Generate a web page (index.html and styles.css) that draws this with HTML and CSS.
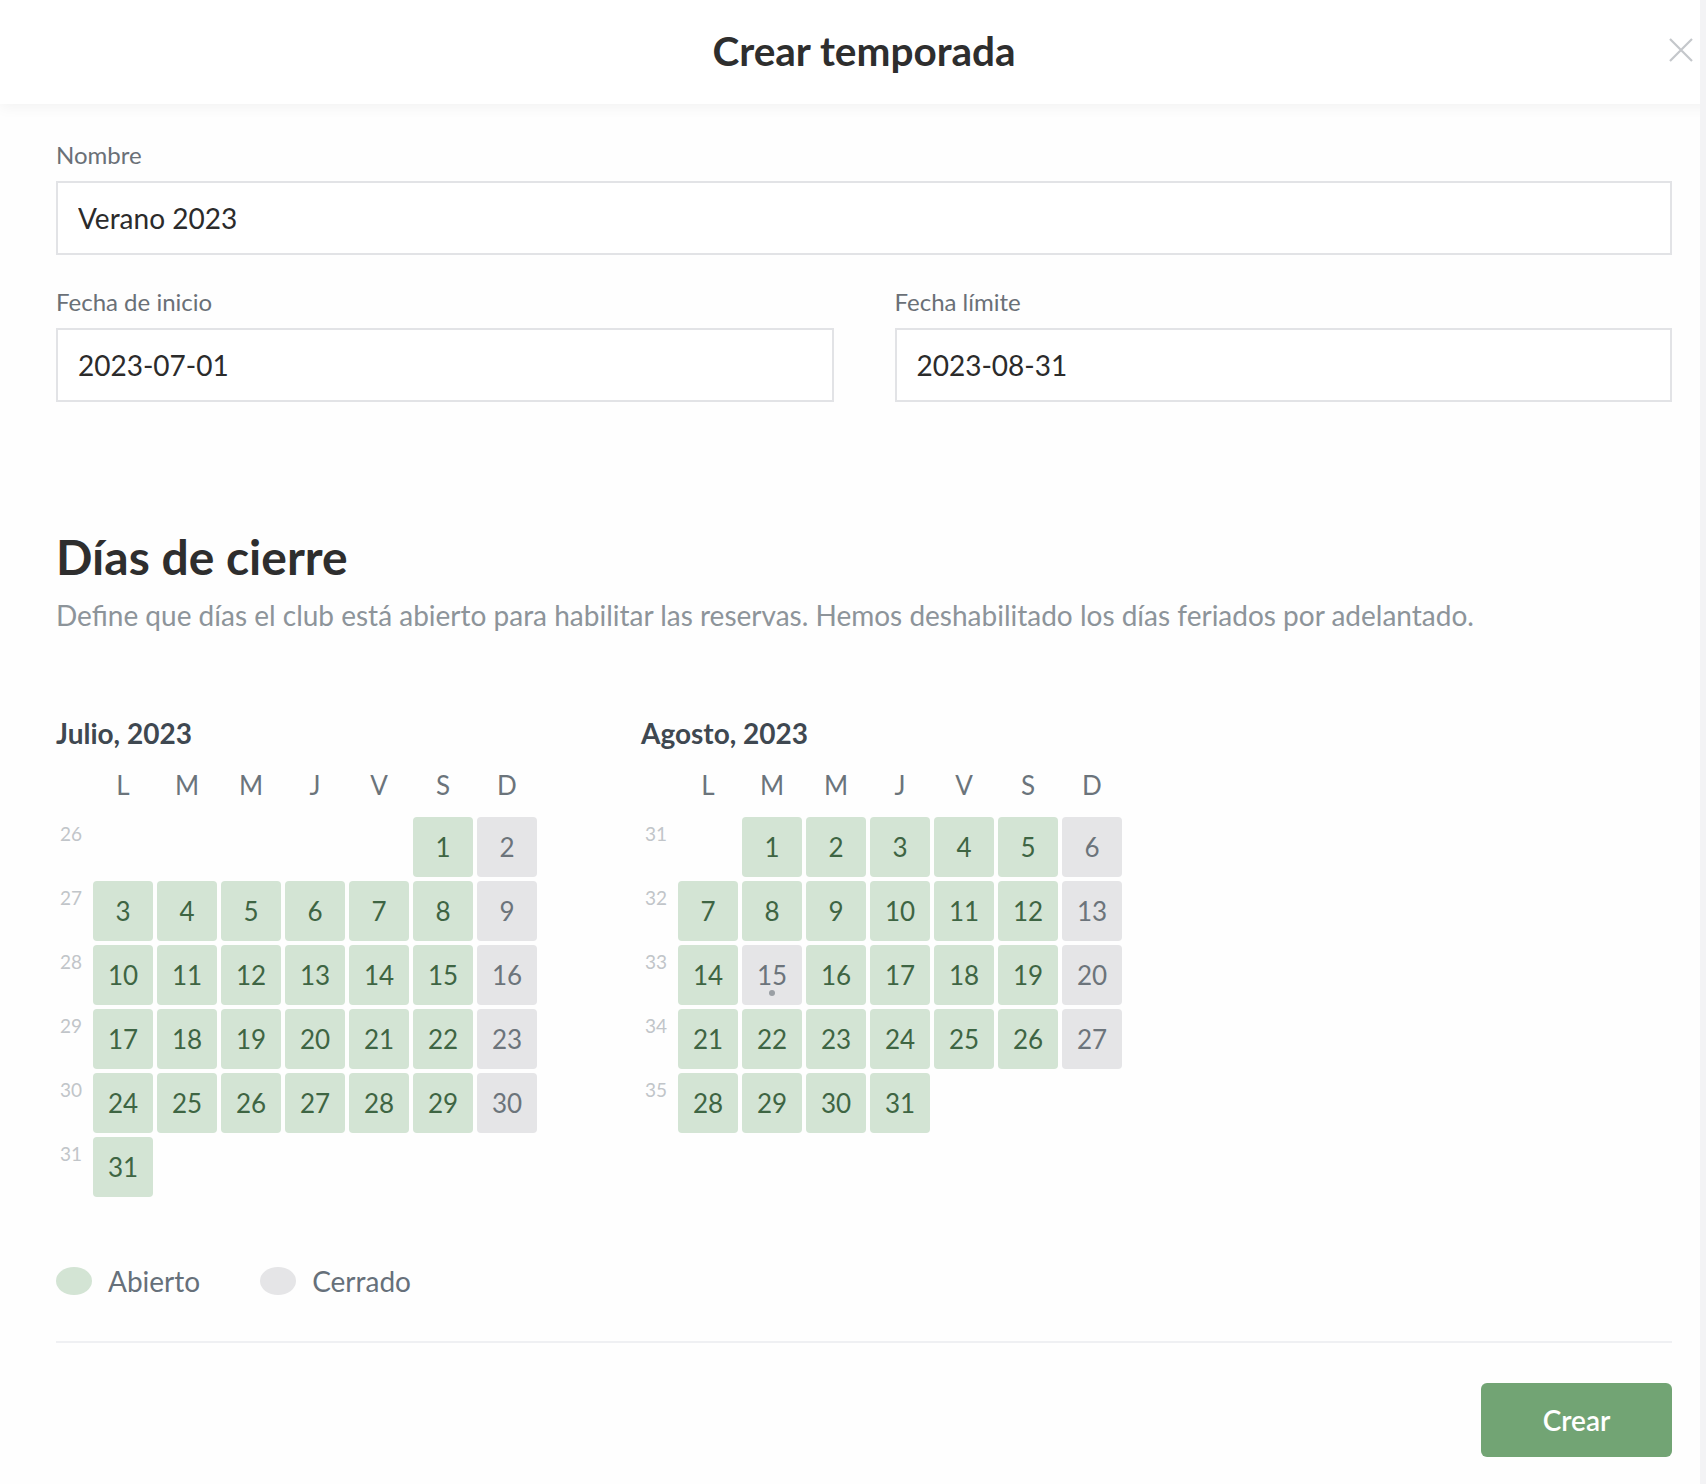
FILE: index.html
```html
<!DOCTYPE html>
<html lang="es">
<head>
    <meta charset="UTF-8">
    <meta name="viewport" content="width=device-width, initial-scale=1.0">
    <title>Crear temporada</title>
    <link rel="stylesheet" href="styles.css">
</head>
<body>
    <div class="modal">
        <header class="modal-header">
            <h1>Crear temporada</h1>
            <button class="close-btn" aria-label="Cerrar">
                <svg width="24" height="24" viewBox="0 0 24 24">
                    <path d="M1 1 L23 23 M23 1 L1 23" stroke="#c4c7cb" stroke-width="2.2" fill="none"/>
                </svg>
            </button>
        </header>

        <div class="modal-body">
            <div class="field">
                <label for="nombre">Nombre</label>
                <input type="text" id="nombre" value="Verano 2023">
            </div>
            <div class="field-row">
                <div class="field">
                    <label for="inicio">Fecha de inicio</label>
                    <input type="text" id="inicio" value="2023-07-01">
                </div>
                <div class="field">
                    <label for="limite">Fecha límite</label>
                    <input type="text" id="limite" value="2023-08-31">
                </div>
            </div>

            <h2 class="section-title">Días de cierre</h2>
            <p class="section-desc">Define que días el club está abierto para habilitar las reservas. Hemos deshabilitado los días feriados por adelantado.</p>

            <div class="months">
                <div class="month">
                    <h3>Julio, 2023</h3>
                    <div class="grid weekdays">
                        <span></span><span>L</span><span>M</span><span>M</span><span>J</span><span>V</span><span>S</span><span>D</span>
                    </div>
                    <div class="grid days">
                        <span class="wk">26</span><span></span><span></span><span></span><span></span><span></span><span class="day open">1</span><span class="day closed">2</span>
                        <span class="wk">27</span><span class="day open">3</span><span class="day open">4</span><span class="day open">5</span><span class="day open">6</span><span class="day open">7</span><span class="day open">8</span><span class="day closed">9</span>
                        <span class="wk">28</span><span class="day open">10</span><span class="day open">11</span><span class="day open">12</span><span class="day open">13</span><span class="day open">14</span><span class="day open">15</span><span class="day closed">16</span>
                        <span class="wk">29</span><span class="day open">17</span><span class="day open">18</span><span class="day open">19</span><span class="day open">20</span><span class="day open">21</span><span class="day open">22</span><span class="day closed">23</span>
                        <span class="wk">30</span><span class="day open">24</span><span class="day open">25</span><span class="day open">26</span><span class="day open">27</span><span class="day open">28</span><span class="day open">29</span><span class="day closed">30</span>
                        <span class="wk">31</span><span class="day open">31</span>
                    </div>
                </div>

                <div class="month">
                    <h3>Agosto, 2023</h3>
                    <div class="grid weekdays">
                        <span></span><span>L</span><span>M</span><span>M</span><span>J</span><span>V</span><span>S</span><span>D</span>
                    </div>
                    <div class="grid days">
                        <span class="wk">31</span><span></span><span class="day open">1</span><span class="day open">2</span><span class="day open">3</span><span class="day open">4</span><span class="day open">5</span><span class="day closed">6</span>
                        <span class="wk">32</span><span class="day open">7</span><span class="day open">8</span><span class="day open">9</span><span class="day open">10</span><span class="day open">11</span><span class="day open">12</span><span class="day closed">13</span>
                        <span class="wk">33</span><span class="day open">14</span><span class="day closed holiday">15</span><span class="day open">16</span><span class="day open">17</span><span class="day open">18</span><span class="day open">19</span><span class="day closed">20</span>
                        <span class="wk">34</span><span class="day open">21</span><span class="day open">22</span><span class="day open">23</span><span class="day open">24</span><span class="day open">25</span><span class="day open">26</span><span class="day closed">27</span>
                        <span class="wk">35</span><span class="day open">28</span><span class="day open">29</span><span class="day open">30</span><span class="day open">31</span>
                    </div>
                </div>
            </div>

            <div class="legend">
                <div class="legend-item"><span class="dot open"></span>Abierto</div>
                <div class="legend-item"><span class="dot closed"></span>Cerrado</div>
            </div>

            <div class="modal-footer">
                <button class="btn-primary">Crear</button>
            </div>
        </div>
    </div>
    <div class="scrollbar"></div>
</body>
</html>
```

FILE: styles.css
```css
body {
    margin: 0;
    padding: 0;
    font-family: 'Lato', 'Open Sans', sans-serif;
    background: #ffffff;
    overflow: hidden;
    color: #2b2b2b;
}

.modal {
    width: 1728px;
    background: #fefefe;
    min-height: 1484px;
}

.modal-header {
    height: 104px;
    display: flex;
    align-items: center;
    justify-content: center;
    position: relative;
    background: #ffffff;
    box-shadow: 0 3px 14px rgba(0, 0, 0, 0.05);
}

.modal-header h1 {
    margin: -3px 0 0;
    font-size: 40.5px;
    font-weight: 700;
    color: #2e2e2e;
}

.close-btn {
    position: absolute;
    right: 35px;
    top: 38px;
    padding: 0;
    border: none;
    background: none;
    line-height: 0;
}

.modal-body {
    padding: 37px 56px 0;
}

.field {
    display: flex;
    flex-direction: column;
    margin-bottom: 33px;
}

.field label {
    font-size: 24px;
    line-height: 28px;
    color: #6a7077;
    margin-bottom: 12px;
}

.field input {
    height: 74px;
    box-sizing: border-box;
    border: 2px solid #e2e3e6;
    padding: 0 20px;
    font-family: 'Lato', sans-serif;
    font-size: 28px;
    color: #2b2b2b;
    outline: none;
}

.field-row {
    display: grid;
    grid-template-columns: 1fr 1fr;
    column-gap: 61px;
}

.section-title {
    margin: 93px 0 0;
    font-size: 48px;
    line-height: 1.2;
    font-weight: 700;
    color: #2e2e2e;
}

.section-desc {
    margin: 13px 0 0;
    font-size: 28px;
    line-height: 1.2;
    color: #8d949a;
}

.months {
    display: flex;
    gap: 104px;
    margin-top: 85px;
}

.month h3 {
    margin: 0;
    font-size: 28px;
    line-height: 1.2;
    font-weight: 700;
    color: #3f4851;
}

.grid {
    display: grid;
    grid-template-columns: 33px repeat(7, 60px);
    gap: 4px;
}

.weekdays {
    margin-top: 19px;
    height: 47px;
}

.weekdays span {
    font-size: 26px;
    line-height: 31px;
    text-align: center;
    color: #6b747b;
}

.days {
    grid-auto-rows: 60px;
}

.wk {
    font-size: 19px;
    line-height: 23px;
    padding: 5px 0 0 4px;
    color: #c1c5c9;
}

.day {
    display: flex;
    align-items: center;
    justify-content: center;
    border-radius: 4px;
    font-size: 26px;
    position: relative;
}

.day.open {
    background: #d3e4d4;
    color: #3e6543;
}

.day.closed {
    background: #e5e5e7;
    color: #6c747b;
}

.day.holiday::after {
    content: "";
    position: absolute;
    left: 50%;
    bottom: 9px;
    width: 6px;
    height: 6px;
    margin-left: -3px;
    border-radius: 50%;
    background: #9a9fa4;
}

.legend {
    display: flex;
    gap: 60px;
    margin-top: 67px;
}

.legend-item {
    display: flex;
    align-items: center;
    gap: 16px;
    font-size: 28px;
    color: #66707a;
}

.dot {
    width: 36px;
    height: 28px;
    border-radius: 50%;
}

.dot.open {
    background: #d3e4d4;
}

.dot.closed {
    background: #e5e5e7;
}

.modal-footer {
    margin-top: 43px;
    border-top: 2px solid #eff0f3;
    padding-top: 40px;
    display: flex;
    justify-content: flex-end;
}

.btn-primary {
    width: 191px;
    height: 74px;
    border: none;
    border-radius: 6px;
    background: #72a474;
    color: #ffffff;
    font-family: 'Lato', sans-serif;
    font-size: 28px;
    font-weight: 600;
}

.scrollbar {
    position: fixed;
    top: 0;
    right: 0;
    width: 6px;
    height: 100%;
    background: #f3f3f5;
}
```
